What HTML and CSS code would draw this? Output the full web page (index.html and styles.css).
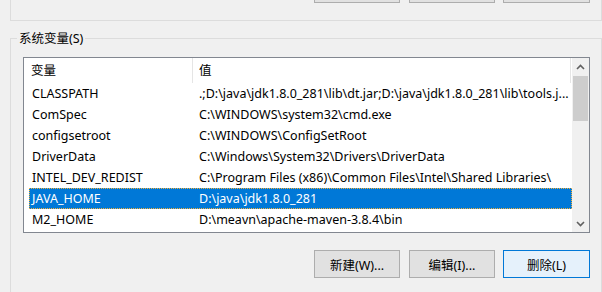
FILE: index.html
```html
<!DOCTYPE html>
<html lang="zh-CN">
<head>
    <meta charset="UTF-8">
    <meta name="viewport" content="width=device-width, initial-scale=1.0">
    <title>环境变量</title>
    <link rel="stylesheet" href="styles.css">
</head>
<body>
    <!-- upper group is scrolled off, only the bottom edge of its buttons shows -->
    <div class="top-group">
        <button class="btn"></button>
        <button class="btn"></button>
        <button class="btn"></button>
    </div>

    <div class="group">
        <div class="group-title">系统变量(S)</div>
        <div class="list">
            <div class="list-main">
                <div class="list-head">
                    <div class="head-name">变量</div>
                    <div class="head-value">值</div>
                </div>
                <div class="row">
                    <div class="name">CLASSPATH</div>
                    <div class="value">.;D:\java\jdk1.8.0_281\lib\dt.jar;D:\java\jdk1.8.0_281\lib\tools.j...</div>
                </div>
                <div class="row">
                    <div class="name">ComSpec</div>
                    <div class="value">C:\WINDOWS\system32\cmd.exe</div>
                </div>
                <div class="row">
                    <div class="name">configsetroot</div>
                    <div class="value">C:\WINDOWS\ConfigSetRoot</div>
                </div>
                <div class="row">
                    <div class="name">DriverData</div>
                    <div class="value">C:\Windows\System32\Drivers\DriverData</div>
                </div>
                <div class="row">
                    <div class="name">INTEL_DEV_REDIST</div>
                    <div class="value">C:\Program Files (x86)\Common Files\Intel\Shared Libraries\</div>
                </div>
                <div class="row selected">
                    <div class="name">JAVA_HOME</div>
                    <div class="value">D:\java\jdk1.8.0_281</div>
                </div>
                <div class="row">
                    <div class="name">M2_HOME</div>
                    <div class="value">D:\meavn\apache-maven-3.8.4\bin</div>
                </div>
            </div>
            <div class="scrollbar">
                <div class="arrow up">
                    <svg width="9" height="6" viewBox="0 0 9 6"><path d="M1 5 L4.5 1.5 L8 5" fill="none" stroke="#606060" stroke-width="1.6"/></svg>
                </div>
                <div class="thumb"></div>
                <div class="track"></div>
                <div class="arrow down">
                    <svg width="9" height="6" viewBox="0 0 9 6"><path d="M1 1 L4.5 4.5 L8 1" fill="none" stroke="#606060" stroke-width="1.6"/></svg>
                </div>
            </div>
        </div>
        <div class="actions">
            <button class="btn">新建(W)...</button>
            <button class="btn">编辑(I)...</button>
            <button class="btn btn-default">删除(L)</button>
        </div>
    </div>
</body>
</html>
```

FILE: styles.css
```css
* {
    margin: 0;
    padding: 0;
    box-sizing: border-box;
}
body {
    font-family: "Noto Sans", "Noto Sans CJK SC", sans-serif;
    font-size: 12.5px;
    background: #f0f0f0;
    color: #000;
    overflow: hidden;
}
.btn {
    width: 86px;
    height: 28px;
    border: 1px solid #adadad;
    background: #e1e1e1;
    font: inherit;
    color: #000;
}
.btn-default {
    width: 87px;
    border-color: #0078d7;
    background: #e5f1fb;
}
.top-group {
    display: flex;
    align-items: flex-start;
    justify-content: flex-end;
    gap: 9px;
    width: 592px;
    height: 21px;
    margin-left: 10px;
    padding-right: 11px;
    border: 1px solid #dcdcdc;
    border-top: none;
}
.top-group .btn {
    margin-top: -25px;
}
.top-group .btn:last-child {
    width: 87px;
    margin-left: -1px;
}
.group {
    width: 592px;
    height: 260px;
    margin: 17px 0 0 10px;
    padding: 0 11px 0 12px;
    border: 1px solid #dcdcdc;
    border-bottom: none;
}
.group-title {
    width: fit-content;
    margin: -8px 0 0 -6px;
    padding: 0 2px;
    line-height: 15px;
    background: #f0f0f0;
}
.list {
    display: flex;
    height: 176px;
    margin-top: 11px;
    border: 1px solid #828790;
    background: #fff;
}
.list-main {
    width: 548px;
    overflow: hidden;
}
.list-head {
    display: flex;
    height: 25px;
    line-height: 25px;
}
.head-name {
    width: 169px;
    padding-left: 7px;
    border-right: 1px solid #e5e5e5;
}
.head-value {
    width: 378px;
    padding-left: 6px;
    border-right: 1px solid #e5e5e5;
}
.row {
    display: flex;
    width: 543px;
    height: 21px;
    margin-left: 5px;
    line-height: 21px;
    white-space: nowrap;
}
.row .name {
    width: 167px;
    padding-left: 3px;
}
.row .value {
    flex: 1;
    padding-left: 3px;
    overflow: hidden;
}
.row.selected {
    background: #0078d7;
    color: #fff;
    outline: 1px dotted #f2b03c;
    outline-offset: -1px;
}
.scrollbar {
    display: flex;
    flex-direction: column;
    width: 17px;
    background: #f0f0f0;
}
.arrow {
    display: flex;
    align-items: center;
    justify-content: center;
    height: 18px;
}
.arrow.down {
    height: 17px;
}
.thumb {
    height: 45px;
    margin: 0 1px;
    background: #cdcdcd;
}
.track {
    flex: 1;
}
.actions {
    display: flex;
    justify-content: flex-end;
    gap: 9px;
    margin-top: 17px;
}
.actions .btn-default {
    margin-left: -1px;
}
```
